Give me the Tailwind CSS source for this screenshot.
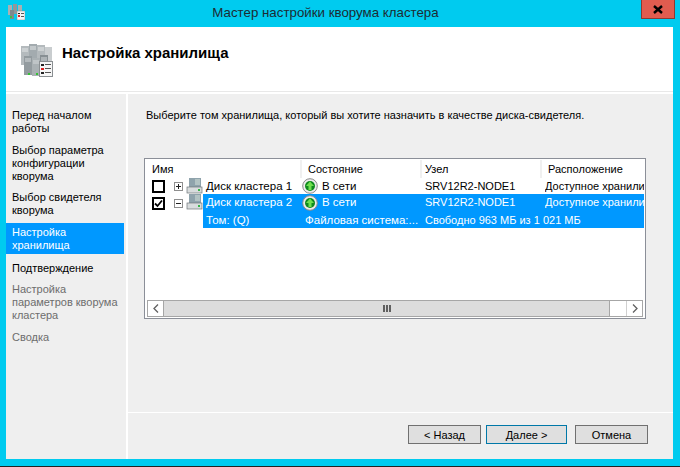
<!DOCTYPE html>
<html lang="en">
<head>
    <meta charset="UTF-8">
    <title>Мастер настройки кворума кластера</title>
    <script src="https://cdn.jsdelivr.net/npm/@tailwindcss/browser@4"></script>
</head>
<body class="bg-[#00cbef]">

<div class="w-[680px] h-[467px] overflow-hidden flex flex-col bg-[#00cbef] font-['Liberation_Sans',sans-serif] text-[11px] text-black">

    <!-- Title bar -->
    <div class="h-[27px] shrink-0 flex items-start relative">
        <svg class="absolute left-[7px] top-[4px]" width="18" height="16" viewBox="0 0 18 16">
            <rect x="1" y="1" width="4" height="10" fill="#a9b0b3"/>
            <rect x="6" y="0" width="4" height="10" fill="#8f979b"/>
            <rect x="11" y="1" width="4" height="7" fill="#a9b0b3"/>
            <rect x="3" y="6" width="4" height="9" fill="#7f888c"/>
            <rect x="3" y="12" width="2" height="2" fill="#3fbf3f"/>
            <rect x="10" y="7" width="8" height="9" fill="#f4f4f4" stroke="#8a8a8a" stroke-width="0.5"/>
            <rect x="11" y="9" width="2" height="1" fill="#222"/>
            <rect x="11" y="11" width="2" height="2" fill="#d22"/>
            <rect x="14" y="9" width="3" height="1" fill="#555"/>
            <rect x="14" y="12" width="3" height="1" fill="#555"/>
        </svg>
        <div class="w-full pr-[29px] text-center text-[13.3px] leading-[26px] text-[#1d2b33]">Мастер настройки кворума кластера</div>
        <div class="absolute left-[641px] top-0 w-[34px] h-[19px] bg-[#e05c4f] border border-t-0 border-[#8c3a33] flex items-center justify-center">
            <svg width="10" height="9" viewBox="0 0 10 9"><path d="M1 1 L9 8 M9 1 L1 8" stroke="#000" stroke-width="2.4"/></svg>
        </div>
    </div>

    <!-- Dialog body -->
    <div class="mx-[6px] w-[667px] h-[432px] shrink-0 bg-white flex flex-col">

        <!-- Header -->
        <div class="h-[65px] shrink-0 flex items-start border-b border-[#e8e8e8]">
            <svg class="ml-[14px] mt-[17px]" width="34" height="33" viewBox="0 0 34 33">
                <rect x="1" y="2" width="8" height="19" fill="#b4babd"/>
                <rect x="9" y="0" width="8" height="19" fill="#a3abaf"/>
                <rect x="17" y="1" width="8" height="18" fill="#b4babd"/>
                <rect x="25" y="3" width="7" height="17" fill="#c9cdcf"/>
                <path d="M2 5h6M2 7h6M10 3h6M10 5h6M18 4h6M18 6h6" stroke="#e4e7e8"/>
                <rect x="4" y="12" width="8" height="19" fill="#939b9f"/>
                <rect x="12" y="14" width="8" height="18" fill="#aab1b4"/>
                <rect x="20" y="11" width="8" height="18" fill="#878f93"/>
                <path d="M5 15h6M5 17h6M13 17h6M13 19h6M21 14h6M21 16h6" stroke="#d4d8da"/>
                <rect x="8" y="29" width="2" height="2" fill="#35c135"/>
                <rect x="16" y="29" width="2" height="2" fill="#35c135"/>
                <rect x="19.5" y="17.5" width="13" height="15" fill="#f6f6f6" stroke="#8a8f92"/>
                <rect x="21" y="20" width="3" height="2" fill="#222"/>
                <rect x="21" y="24" width="3" height="2" fill="#d22"/>
                <rect x="21" y="28" width="3" height="2" fill="#222"/>
                <rect x="25" y="20" width="6" height="1" fill="#555"/>
                <rect x="25" y="24" width="6" height="1" fill="#555"/>
                <rect x="25" y="28" width="6" height="1" fill="#555"/>
            </svg>
            <h1 class="ml-[8px] mt-[17px] text-[15px] leading-[18px] font-bold">Настройка хранилища</h1>
        </div>

        <div class="flex-1 flex min-h-0 pt-[2px]">
            <!-- Steps -->
            <div class="w-[120px] shrink-0 bg-[#efefef] pt-[15px] leading-[13px]">
                <div class="pl-[6px] pb-[9px]">Перед началом<br>работы</div>
                <div class="pl-[6px] pb-[8px]">Выбор параметра<br>конфигурации<br>кворума</div>
                <div class="pl-[6px] pb-[6px]">Выбор свидетеля<br>кворума</div>
                <div class="pl-[6px] pt-[3px] pb-[2px] w-[118px] bg-[#0098ff] text-white">Настройка<br>хранилища</div>
                <div class="pl-[6px] pt-[8px] pb-[8px]">Подтверждение</div>
                <div class="pl-[6px] pb-[9px] text-[#6d6d6d]">Настройка<br>параметров кворума<br>кластера</div>
                <div class="pl-[6px] text-[#6d6d6d]">Сводка</div>
            </div>

            <!-- Main panel -->
            <div class="ml-[2px] w-[545px] flex flex-col">
                <div class="flex-1 bg-[#efefef] pl-[16px] pt-[14px]">
                    <p class="pl-[2px] leading-[14px]">Выберите том хранилища, который вы хотите назначить в качестве диска-свидетеля.</p>

                    <div class="mt-[36px] w-[502px] h-[161px] bg-white border border-[#8b8f98] p-[1px] flex flex-col">
                        <!-- Column headers -->
                        <div class="h-[18px] flex leading-[18px] shrink-0">
                            <div class="w-[156px] pl-[6px] border-r-2 border-[#f0f0f0]">Имя</div>
                            <div class="w-[120px] pl-[6px] border-r-2 border-[#f0f0f0]">Состояние</div>
                            <div class="w-[120px] pl-[3px] border-r-2 border-[#f0f0f0]">Узел</div>
                            <div class="flex-1 pl-[6px] overflow-hidden whitespace-nowrap">Расположение</div>
                        </div>

                        <!-- Row 1 -->
                        <div class="h-[16px] flex items-center leading-[16px] shrink-0 whitespace-nowrap">
                            <div class="w-[57px] h-full relative shrink-0">
                                <span class="absolute left-[6px] top-[2px] w-[13px] h-[13px] border-2 border-black bg-white"></span>
                                <svg class="absolute left-[28px] top-[4px]" width="9" height="9" viewBox="0 0 9 9"><rect x="0.5" y="0.5" width="8" height="8" fill="#fff" stroke="#8e8e8e"/><path d="M2 4.5H7M4.5 2V7" stroke="#222"/></svg>
                                <svg class="absolute left-[40px] top-0" width="17" height="16" viewBox="0 0 17 16"><rect x="3" y="0" width="12" height="9" fill="#8fa3ac"/><path d="M9 2h5M9 4h5M9 6h5" stroke="#d5e2da"/><rect x="1" y="9" width="15" height="6" fill="#d8dcdd" stroke="#6f7679" stroke-width="0.7"/><rect x="12" y="11" width="2" height="2" fill="#39b54a"/></svg>
                            </div>
                            <div class="w-[98px] pl-[3px] shrink-0 text-[11.5px]">Диск кластера 1</div>
                            <div class="w-[124px] pl-[1px] flex items-center gap-[4px] shrink-0">
                                <svg width="16" height="16" viewBox="0 0 16 16"><circle cx="8" cy="8" r="7.3" fill="#ececec" stroke="#8b8b8b"/><circle cx="8" cy="8" r="5" fill="#0f8a1e"/><path d="M8 3.5L12 8H9.5V12H6.5V8H4Z" fill="#6fe04e"/></svg>
                                <span class="text-[11.5px]">В сети</span>
                            </div>
                            <div class="w-[120px] shrink-0">SRV12R2-NODE1</div>
                            <div class="flex-1 overflow-hidden">Доступное хранилище</div>
                        </div>

                        <!-- Row 2 -->
                        <div class="h-[17px] flex items-center leading-[17px] shrink-0 whitespace-nowrap">
                            <div class="w-[57px] h-full relative shrink-0">
                                <span class="absolute left-[6px] top-[3px] w-[13px] h-[13px] border-2 border-black bg-white flex items-center justify-center">
                                    <svg width="9" height="9" viewBox="0 0 9 9"><path d="M1 4.5L3.5 7L8 1.5" fill="none" stroke="#000" stroke-width="1.8"/></svg>
                                </span>
                                <svg class="absolute left-[28px] top-[5px]" width="9" height="9" viewBox="0 0 9 9"><rect x="0.5" y="0.5" width="8" height="8" fill="#fff" stroke="#8e8e8e"/><path d="M2 4.5H7" stroke="#222"/></svg>
                                <svg class="absolute left-[40px] top-0" width="17" height="16" viewBox="0 0 17 16"><rect x="3" y="0" width="12" height="9" fill="#8fa3ac"/><path d="M9 2h5M9 4h5M9 6h5" stroke="#d5e2da"/><rect x="1" y="9" width="15" height="6" fill="#d8dcdd" stroke="#6f7679" stroke-width="0.7"/><rect x="12" y="11" width="2" height="2" fill="#39b54a"/></svg>
                            </div>
                            <div class="flex-1 flex items-center h-full bg-[#0098ff] text-white overflow-hidden">
                                <div class="w-[98px] pl-[3px] shrink-0 text-[11.5px]">Диск кластера 2</div>
                                <div class="w-[124px] pl-[1px] flex items-center gap-[4px] shrink-0">
                                    <svg width="16" height="16" viewBox="0 0 16 16"><circle cx="8" cy="8" r="7.3" fill="#ececec" stroke="#8b8b8b"/><circle cx="8" cy="8" r="5" fill="#0f8a1e"/><path d="M8 3.5L12 8H9.5V12H6.5V8H4Z" fill="#6fe04e"/></svg>
                                    <span class="text-[11.5px]">В сети</span>
                                </div>
                                <div class="w-[120px] shrink-0">SRV12R2-NODE1</div>
                                <div class="flex-1 overflow-hidden">Доступное хранилище</div>
                            </div>
                        </div>

                        <!-- Row 3 -->
                        <div class="h-[17px] ml-[57px] pt-[1px] flex items-center leading-[16px] shrink-0 whitespace-nowrap bg-[#0098ff] text-white">
                            <div class="w-[98px] pl-[3px] shrink-0 text-[11.5px]">Том: (Q)</div>
                            <div class="w-[124px] pl-[4px] shrink-0 text-[11.5px]">Файловая система:...</div>
                            <div>Свободно 963 МБ из 1 021 МБ</div>
                        </div>

                        <div class="flex-1"></div>

                        <!-- Scrollbar -->
                        <div class="h-[17px] mx-[1px] flex border border-[#a6a6a6] bg-[#dcdcdc] shrink-0">
                            <div class="w-[16px] bg-white border-r border-[#a6a6a6] flex items-center justify-center">
                                <svg width="6" height="9" viewBox="0 0 6 9"><path d="M5 .5L1 4.5L5 8.5" fill="none" stroke="#606060" stroke-width="1.3"/></svg>
                            </div>
                            <div class="flex-1 flex items-center justify-center">
                                <svg width="8" height="7" viewBox="0 0 8 7"><path d="M0 0h2v7H0zM3 0h2v7H3zM6 0h2v7H6z" fill="#606060"/></svg>
                            </div>
                            <div class="w-[17px] bg-white border-l border-[#a6a6a6]"></div>
                            <div class="w-[16px] bg-white border-l border-[#d0d0d0] flex items-center justify-center">
                                <svg width="6" height="9" viewBox="0 0 6 9"><path d="M1 .5L5 4.5L1 8.5" fill="none" stroke="#606060" stroke-width="1.3"/></svg>
                            </div>
                        </div>
                    </div>
                </div>

                <!-- Footer -->
                <div class="h-[47px] shrink-0 bg-[#efefef] border-t border-white flex items-start pt-[12px] pl-[280px]">
                    <button class="w-[73px] h-[19px] pt-[1px] bg-[#dfdfdf] border border-[#707070] leading-[16px]">&lt; Назад</button>
                    <button class="ml-[5px] w-[81px] h-[19px] pt-[1px] bg-[#dfdfdf] border border-[#0078a8] leading-[16px]">Далее &gt;</button>
                    <button class="ml-[8px] w-[73px] h-[19px] pt-[1px] bg-[#dfdfdf] border border-[#707070] leading-[16px]">Отмена</button>
                </div>
            </div>
        </div>
    </div>

    <div class="flex-1"></div>
    <div class="h-[1px] bg-[#222] shrink-0"></div>
</div>

</body>
</html>
